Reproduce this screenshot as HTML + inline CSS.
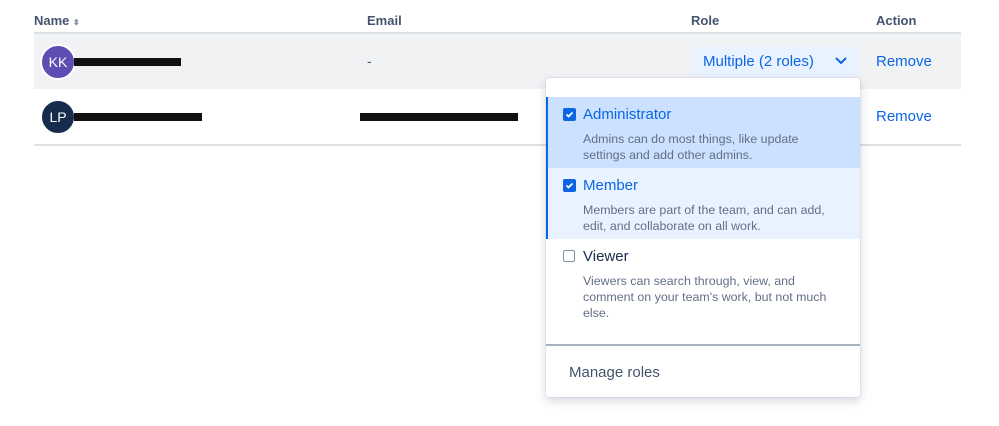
<!DOCTYPE html>
<html><head><style>
body{margin:0;width:999px;height:426px;background:#fff;font-family:"Liberation Sans",sans-serif;position:relative;overflow:hidden;color:#172b4d}
.a{position:absolute}
.h{font-size:13px;font-weight:bold;color:#44546f;top:13px}
.blk{background:#111;height:8px}
.av{width:32px;height:32px;border-radius:50%;color:#fff;font-size:14px;text-align:center;line-height:32px;border:2px solid #fff}
.rm{color:#0c66e4;font-size:15px}
.cb{width:13px;height:13px;border-radius:2px;background:#0c66e4}
.cb svg{display:block}
.t{font-size:15px}
.d{font-size:12.4px;color:#626f86;line-height:16px;width:256px}
</style></head><body>
<div class="a h" style="left:34px">Name <span style="font-size:8px;color:#8590a2">⬍</span></div>
<div class="a h" style="left:367px">Email</div>
<div class="a h" style="left:691px">Role</div>
<div class="a h" style="left:876px">Action</div>
<div class="a" style="left:34px;top:32px;width:927px;height:2px;background:#dcdfe4"></div>
<div class="a" style="left:34px;top:34px;width:927px;height:55px;background:#f1f2f4"></div>
<div class="a" style="left:34px;top:144px;width:927px;height:2px;background:#dcdfe4"></div>
<div class="a av" style="left:40px;top:44px;background:#5e4db2">KK</div>
<div class="a blk" style="left:74px;top:58px;width:107px"></div>
<div class="a" style="left:367px;top:53px;font-size:14px;color:#44546f">-</div>
<div class="a av" style="left:40px;top:99px;background:#172b4d">LP</div>
<div class="a blk" style="left:74px;top:113px;width:128px"></div>
<div class="a blk" style="left:360px;top:113px;width:158px"></div>
<div class="a" style="left:691px;top:47px;width:169px;height:30px;background:#e9f2ff"></div>
<div class="a" style="left:703px;top:53px;font-size:15px;color:#0c66e4">Multiple (2 roles)</div>
<svg class="a" style="left:834px;top:56px" width="14" height="10"><path d="M2 2l5 5 5-5" stroke="#0c66e4" stroke-width="2" fill="none"/></svg>
<div class="a rm" style="left:876px;top:53px">Remove</div>
<div class="a rm" style="left:876px;top:108px">Remove</div>
<div class="a" style="left:546px;top:78px;width:314px;height:319px;background:#fff;border-radius:3px;box-shadow:0 4px 10px rgba(9,30,66,.18),0 0 1px rgba(9,30,66,.3)"></div>
<div class="a" style="left:546px;top:97px;width:314px;height:71px;background:#cce0ff"></div>
<div class="a" style="left:546px;top:168px;width:314px;height:71px;background:#e9f2ff"></div>
<div class="a" style="left:546px;top:97px;width:2px;height:142px;background:#0c66e4"></div>
<div class="a cb" style="left:563px;top:108px"><svg width="13" height="13"><path d="M3.5 6.5l2 2 4-4" stroke="#fff" stroke-width="1.8" fill="none"/></svg></div>
<div class="a t" style="left:583px;top:106px;color:#0c66e4">Administrator</div>
<div class="a d" style="left:583px;top:131px">Admins can do most things, like update settings and add other admins.</div>
<div class="a cb" style="left:563px;top:179px"><svg width="13" height="13"><path d="M3.5 6.5l2 2 4-4" stroke="#fff" stroke-width="1.8" fill="none"/></svg></div>
<div class="a t" style="left:583px;top:177px;color:#0c66e4">Member</div>
<div class="a d" style="left:583px;top:202px">Members are part of the team, and can add, edit, and collaborate on all work.</div>
<div class="a" style="left:563px;top:250px;width:10px;height:10px;border:1.5px solid #8590a2;border-radius:2px;background:#fff"></div>
<div class="a t" style="left:583px;top:248px">Viewer</div>
<div class="a d" style="left:583px;top:273px">Viewers can search through, view, and comment on your team's work, but not much else.</div>
<div class="a" style="left:546px;top:344px;width:314px;height:2px;background:#8590a2;opacity:.7"></div>
<div class="a t" style="left:569px;top:364px;color:#44546f">Manage roles</div>
</body></html>
